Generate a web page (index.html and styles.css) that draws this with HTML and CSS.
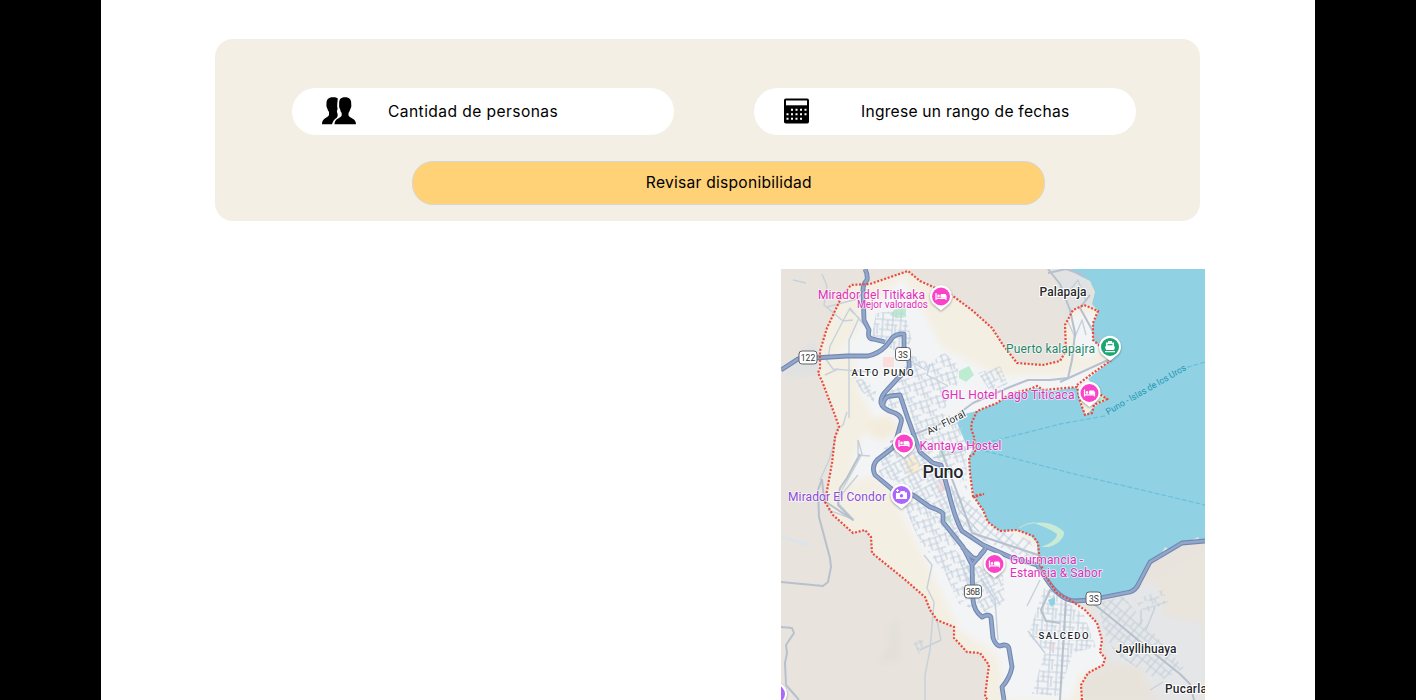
FILE: index.html
```html
<!DOCTYPE html>
<html lang="es">
<head>
<meta charset="utf-8">
<title>Disponibilidad</title>
<link rel="stylesheet" href="styles.css">
</head>
<body>
<main class="page">
  <section class="booking">
    <div class="fields">
      <div class="field">
        <svg class="people" width="34" height="28" viewBox="0 0 34 28">
          <path d="M11 0.300C7 0 4.200 2.500 4.500 6.500C4.300 8.500 4.300 9.500 5.300 11.500C5.800 13.500 6.500 14 7 15V18C6 21 0 20.500 0 27.300H10C11 23.500 12.500 22.500 14.500 21C16 19.500 16 17.500 15 15C14.500 13.500 15.800 13 15.500 11.500C14.800 9 15.500 5 15.800 1.600C14.500 0.400 13 0.200 11 0.300Z"/>
          <path d="M23 0.300C18.500 0.300 16.800 3 17.200 7C16.900 9 17.200 11 18.200 12.500C18.500 14.500 19 15 19.700 16V18.500C18.500 21.500 12.700 21 12.500 27.300H34C34 21 28 21.500 26.500 18.500V16C27.200 15 27.800 14 28.200 12.300C29.400 10.500 29.500 9 29.200 7C29.600 3 27.500 0.300 23 0.300Z"/>
        </svg>
        <span class="label-people">Cantidad de personas</span>
      </div>
      <div class="field">
        <svg class="calendar" width="25" height="26" viewBox="0 0 25 26">
          <rect y="0.500" width="25" height="25" rx="1.800"/>
          <path d="M2 2.500H23V7.300H2Z" fill="#fff"/>
          <path d="M7 11.700H23M2.500 16.200H23M2.500 20.700H19" stroke="#fff" stroke-width="2" stroke-dasharray="2 2.500"/>
        </svg>
        <span class="label-dates">Ingrese un rango de fechas</span>
      </div>
    </div>
    <button class="check" type="button"><span>Revisar disponibilidad</span></button>
  </section>

  <section class="location">
    <svg class="map" width="424" height="431" viewBox="781 269 424 431">
      <defs>
        <pattern id="grid-a" width="17" height="19" patternUnits="userSpaceOnUse" patternTransform="rotate(-18)">
          <path d="M0 2H17M0 8H12M5 14H17M3 0V14M9 2V19M14 0V8M12 14V19"/>
        </pattern>
        <pattern id="grid-b" width="16" height="18" patternUnits="userSpaceOnUse" patternTransform="rotate(-28)">
          <path d="M0 1H16M0 6H9M4 11H16M0 15H10M2 0V15M7 1V18M12 0V11"/>
        </pattern>
        <pattern id="grid-c" width="18" height="17" patternUnits="userSpaceOnUse" patternTransform="rotate(4)">
          <path d="M0 2H18M5 7H18M0 12H13M3 0V17M8 2V12M13 0V17M16 7V17"/>
        </pattern>
        <pattern id="grid-d" width="18" height="17" patternUnits="userSpaceOnUse" patternTransform="rotate(40)">
          <path d="M0 2H18M0 9H18M3 0V17M9 2V9M14 0V17"/>
        </pattern>
        <filter id="soft" x="-20%" y="-20%" width="140%" height="140%"><feGaussianBlur stdDeviation="3"/></filter>
        <clipPath id="town"><path d="M908 271L870 284L851 285L842 296L827 328L820 351L818 373L836 418L839 427L835 437L832 463L825 502L833 515L853 533L865 530L871 537L872 553L903 578L925 597L937 620L954 627V638L967 652L980 653L989 665L985 697V700H1082L1081 685L1088 673L1103 665L1105 658L1100 652L1102 640L1097 623L1085 610L1070 600L1110 361L1093 340V323L1098 311L1084 305L1073 310L1065 325L1066 351L1060 361L1043 365L1017 363L1003 345L992 328L973 311L953 296L920 281Z"/></clipPath>
        <g id="bed">
          <path d="M-5 -3.500V3.500M-5 1.800H5M5 3.500V-1" fill="none" stroke="#fff" stroke-width="1.200"/>
          <rect x="-0.500" y="-2.400" width="5.500" height="3.700" rx="1" fill="#fff"/><circle cx="-2.500" cy="-0.600" r="1.300" fill="#fff"/>
        </g>
        <path id="pin" d="M0 14L-6 9A11 11 0 1 1 6 9Z"/>
      </defs>

      <!-- terrain -->
      <rect x="781" y="269" width="424" height="431" fill="#e8e3dd"/>
      <g filter="url(#soft)">
        <path d="M781 378L812 340L831 372L812 374Z" fill="#e0e1e2"/>
        <path d="M890 623L899 620V638L901 660L877 665L888 646Z" fill="#e3e0d9"/>
        <path d="M1094 600L1155 580L1190 600L1205 635V700H1160L1110 665L1094 620Z" fill="#e5e6e8"/>
        <path d="M1052 269H1085L1095 310L1070 330L1060 290Z" fill="#e0e2e4"/>
        <path d="M1108 664L1140 667L1155 700H1082V685Z" fill="#e8e3da"/>
        <path d="M1155 580L1205 548V625L1165 615Z" fill="#e9e4dc"/>
      </g>
      <g clip-path="url(#town)">
        <rect x="781" y="269" width="424" height="431" fill="#f4efe3"/>
        <g fill="#f3f4f6" filter="url(#soft)">
          <path d="M867 310L903 277L922 309L942 348L1000 376H1060L1130 360L1080 395L980 430L985 510L1055 560L1110 630V663L1080 674L1070 700H1005L998 655L960 630L930 570L912 535L888 488L870 475L850 485L855 450L875 420L860 395L852 350L830 360L855 335Z"/>
          <path d="M1068 315H1105V350L1080 360Z"/>
        </g>
        <path d="M865 423L888 415L901 430L882 441L870 436Z" fill="#f3ecdc" filter="url(#soft)"/>
      </g>

      <!-- water -->
      <path fill="#90d2e4" d="M1070 269H1205V541L1182 543L1150 562L1138 587L1130 592L1074 601L1057 593L1047 580L1038 563L1037 543L1030 535L1017 530L1000 531L988 522L983 510L974 497L970 473L969 457L973 448L966 444L957 423L960 415L977 411L997 403L1010 395L1037 388L1053 391L1077 387L1080 403L1086 415L1094 407L1107 399L1100 393L1088 379L1110 361L1100 346L1093 340V323L1099 312L1092 304L1095 292L1090 281L1078 275Z"/>
      <path d="M1034 523C1044 521 1057 524 1064 532C1065 538 1056 546 1048 547H1041C1050 544 1057 539 1057 534C1050 529 1042 526 1034 523Z" fill="#cbead6"/>
      <path d="M1019 528Q1026 523 1035 522.500" fill="none" stroke="#cbe3dc"/>
      <path d="M1160 556L1165 547L1170 550ZM1190 541L1198 537L1200 541Z" fill="#e8e3dd"/>
      <g fill="#bdecd0">
        <path d="M890 315L895 309L906 308V317L897 318ZM959 371L969 366L974 375L966 382L959 378ZM939 451L945 449V457L939 458ZM943 519L951 515V519L945 523ZM1097 401L1104 395L1106 400L1098 404Z"/>
      </g>
      <g fill="#fbdedc"><path d="M883 357H894V367H883ZM937 482L943 480L946 490L940 494ZM1049 642H1054V651H1049Z"/></g>
      <path d="M904 460L916 455L921 470L909 477Z" fill="#f8ecd2"/>

      <!-- street blocks -->
      <g class="blocks">
        <path fill="url(#grid-c)" d="M876 313L904 310L912 340L900 355L872 335Z"/>
        <path fill="url(#grid-a)" d="M889 392L912 355L930 364L944 352L958 365L957 385L942 414L960 418L966 445L967 490L946 465L922 450L908 405L888 410Z"/>
        <path fill="url(#grid-b)" d="M854 377L865 380L876 391L874 402L860 390ZM978 373L1000 366L1008 384L990 391Z"/>
        <path fill="url(#grid-b)" d="M884 448L905 440L922 456L941 468L950 512L960 535L955 548L930 507L900 483L878 475Z"/>
        <path fill="url(#grid-a)" d="M900 497L913 498L940 518L951 545L970 566L977 610L959 604L945 573L920 542Z"/>
        <path fill="url(#grid-d)" d="M950 488L973 502L989 525L1030 540L1038 562L983 541L961 525Z"/>
        <path fill="url(#grid-b)" d="M958 558L1003 575L1005 602L986 614L976 602Z"/>
        <path fill="url(#grid-c)" d="M1044 588L1061 597L1084 615L1096 647L1073 653L1058 696L1032 694L1045 651L1028 635Z"/>
        <path fill="url(#grid-d)" d="M1098 603L1123 596L1168 650L1184 668L1160 681L1116 655L1104 632Z"/>
        <path fill="url(#grid-a)" d="M1134 600L1163 590L1168 602L1146 613ZM913 642L922 639L927 648L919 654Z"/>
      </g>
      <path d="M1048 600L1055 597V604L1051 607Z" fill="#90d2e4"/>

      <!-- local streets -->
      <g class="streets">
        <path d="M793 280L806 283M822 274L827 286L824 305L843 321L830 346L828 360M866 289L857 299L827 307M843 321L853 320M849 309L859 318L849 340V418M864 325L850 308L843 321M825 358L833 369L872 372M825 375L838 369M836 437L829 460L820 480M847 412L843 425L836 430M858 440L862 454L842 490L838 503L853 519L828 510M858 440V455L870 456M837 500L858 475M930 364L927 375L948 386M903 357L926 370M951 486L959 510L979 532M978 444L960 452L933 458M981 578L995 600L998 640M1027 606L1040 580M1045 653L1028 631M924 555L932 565L927 588L934 602L930 650L925 675V700M937 620L941 640L920 650M1067 320L1075 337L1082 320L1086 335M1070 290L1078 280L1086 301M1155 607L1146 630M1141 610V625M1150 690L1163 682"/>
      </g>
      <g class="roads">
        <path d="M1048 269L1060 284L1070 310L1075 333L1072 360L1068 378L1050 380L1028 380L1010 387L973 403L950 420L915 434L890 442"/>
        <path d="M1048 273L1066 269L1086 276M1060 382L1108 360M1090 295L1080 308L1095 335L1110 350M941 450L960 500L972 533L1038 555M860 454L847 478L840 488L838 505L853 520L823 500M822 479L818 490L819 517L830 558L831 567L828 582L823 586L781 582M822 479L824 500M781 627L792 628L794 633L786 645L787 653L785 663L786 685L799 700"/>
        <path d="M1094 604L1120 625L1150 650L1180 674L1190 684L1194 700M1046 599L1050 590L1066 597L1060 700M1046 599L1041 610L1046 621L1060 623"/>
      </g>
      <path d="M781 537L809 545" stroke="#dce3ea" stroke-width="3"/>

      <!-- highways -->
      <g id="highways">
        <g class="highway-edge">
          <path id="hw" d="M865 269Q868 275 867 280Q863 284 863 290L864 320L869 330Q867 339 873 339L885 342M781 370L798 359L847 356L868 356Q878 354 886 346L893 337Q898 333 904 334V347Q910 357 909 368Q906 374 900 376L887 390Q880 397 881 403Q882 409 895 413Q903 417 901 423L897 437Q897 445 890 450L877 460Q871 467 875 475L893 490L913 495L930 507Q942 511 943 514V522L963 547L972 565L973 600Q974 611 982 617Q990 613 991 618L993 638Q996 646 1000 646Q1008 643 1009 649L1012 667Q1010 678 1002 687L1004 700M883 407Q883 397 890 396L900 395L907 416L920 452L933 463L941 465L948 490Q955 519 962 531L983 545L1010 557L1037 565L1047 580Q1060 600 1075 601L1090 600L1130 592Q1136 590 1139 583L1150 562L1182 543L1205 541M962 547L972 557Q978 561 981 554L986 548M972 565L985 550"/>
        </g>
        <use href="#hw" class="highway"/>
      </g>

      <path class="ferry" d="M1205 362L1185 368M1105 416L1060 424L978 445M978 449L1070 473L1205 505"/>

      <!-- district limit -->
      <path class="limit" d="M1082 700L1081 685L1088 673L1103 665L1105 658L1100 652L1102 640L1097 623L1085 610L1070 600L1057 593L1048 580L1040 563L1038 543L1033 536L1017 530L1000 531L988 522L983 510L974 497L984 494L973 496L970 473L969 457L975 453L974 437L971 428L972 422L977 411L997 403L1010 394L1030 389L1037 386L1043 390L1077 387L1080 401L1085 415L1092 413L1094 405L1107 399L1098 393M1077 385L1093 373L1110 361L1100 346L1093 340V323L1098 311L1084 305L1073 310L1065 325L1066 351L1060 361L1043 365L1017 363L1003 345L992 328L973 311L953 296L920 281L908 271L870 284L851 285L842 296L827 328L820 351V368L818 373L822 381L836 418L839 427L835 437L832 463L825 502L833 515L853 533L865 530L871 537L872 553L903 578L925 597L930 610L937 620L954 627V638L967 652L980 653L989 665L987 680L985 697L988 700"/>

      <!-- route shields -->
      <g class="shield">
        <rect x="799" y="351" width="18" height="13" rx="3"/><text x="808" y="361">122</text>
        <rect x="895.500" y="347.500" width="15" height="13" rx="3"/><text x="903" y="357.500">3S</text>
        <rect x="964.500" y="585" width="17" height="13" rx="3"/><text x="973" y="595" textLength="14">36B</text>
        <rect x="1086" y="592" width="15" height="13" rx="3"/><text x="1094" y="602">3S</text>
      </g>

      <!-- place names -->
      <g class="place">
        <text x="1039.500" y="295.500" textLength="47">Palapaja</text>
        <text x="1115.500" y="653" textLength="61">Jayllihuaya</text>
        <text x="1165" y="692.500" textLength="42">Pucarla</text>
        <text x="922.500" y="477.500" class="city" textLength="41">Puno</text>
        <text x="851.500" y="376" class="district" textLength="62">ALTO PUNO</text>
        <text x="1038.500" y="639" class="district" textLength="50">SALCEDO</text>
        <text transform="translate(929 435) rotate(-27)" class="avenue" textLength="42">Av. Floral</text>
      </g>
      <text class="ferry-name" transform="translate(1108 415) rotate(-30)" textLength="91">Puno - Islas de los Uros</text>
      <g class="lodging">
        <text x="818" y="299" textLength="107">Mirador del Titikaka</text>
        <text x="857" y="307.500" class="note" textLength="71">Mejor valorados</text>
        <text x="941.500" y="399" textLength="133">GHL Hotel Lago Titicaca</text>
        <text x="919.500" y="449.500" textLength="82">Kantaya Hostel</text>
        <text x="1010" y="564" textLength="73">Gourmancia -</text>
        <text x="1010" y="577" textLength="92">Estancia &amp; Sabor</text>
        <text x="1006" y="353" class="port" textLength="89">Puerto kalapajra</text>
        <text x="788" y="501" class="viewpoint" textLength="98">Mirador El Condor</text>
      </g>

      <!-- markers -->
      <g class="pins">
        <g transform="translate(941 296.500)"><use href="#pin"/><circle r="9" fill="#fb43ca"/><use href="#bed"/></g>
        <g transform="translate(1089.500 393)"><use href="#pin"/><circle r="9" fill="#fb43ca"/><use href="#bed"/></g>
        <g transform="translate(904 443.500)"><use href="#pin"/><circle r="9" fill="#fb43ca"/><use href="#bed"/></g>
        <g transform="translate(994.500 564)"><use href="#pin"/><circle r="9" fill="#fb43ca"/><use href="#bed"/></g>
        <g transform="translate(1110 347)"><use href="#pin"/><circle r="9" fill="#1ba672"/><path d="M-2 -6H2V-4.500H4V-1L5 0L4 3H-4L-5 0L-4 -1V-4.500H-2ZM-5 4H5V5.300H-5Z" fill="#fff"/><path d="M-2.500 -2.300H2.500" stroke="#1ba672" stroke-width="1.200"/></g>
        <g transform="translate(901.500 495)"><use href="#pin"/><circle r="9" fill="#ad66fb"/><path d="M-5.500 -2H-2L-0.500 -4H3L4 -2.500H5.500V4H-5.500Z" fill="#fff"/><circle cy="0.700" r="1.700" fill="#ad66fb"/><path d="M-4 -6V-3M-5.500 -4.500H-2.500" stroke="#fff"/></g>
        <g transform="translate(776 694)"><use href="#pin"/><circle r="9" fill="#ad66fb"/></g>
      </g>
    </svg>
  </section>
</main>
</body>
</html>
```
FILE: styles.css
```css
body {
  margin: 0;
  height: 700px;
  overflow: hidden;
  background: #000;
  font-family: Inter, "Open Sans", sans-serif;
  color: #000;
}
.page {
  box-sizing: border-box;
  width: 1214px;
  height: 700px;
  margin-left: 101px;
  padding: 39.400px 110px 0 114px;
  background: #fff;
  overflow: hidden;
}
.booking {
  box-sizing: border-box;
  width: 985.400px;
  height: 181.600px;
  padding-top: 49px;
  border-radius: 18px;
  background: #f4efe4;
}
.fields {
  display: flex;
  gap: 80px;
  padding-left: 77px;
}
.field {
  box-sizing: border-box;
  display: flex;
  align-items: center;
  width: 382px;
  height: 46.600px;
  padding: 0 0 1px 30px;
  border-radius: 24px;
  background: #fff;
  font-size: 15.600px;
  white-space: nowrap;
}
.people { margin-right: 32px; }
.calendar { margin-right: 52px; }
.label-people { letter-spacing: 0.420px; }
.label-dates { letter-spacing: 0.250px; }
.check {
  display: block;
  width: 633px;
  height: 44px;
  margin: 26px 0 0 197.400px;
  padding: 0 0 1px;
  border: 1px solid #d6d6d6;
  border-radius: 21px;
  background: #ffd277;
  color: #000;
  font: 15.600px Inter, "Open Sans", sans-serif;
  letter-spacing: 0.250px;
}
.location {
  display: flex;
  justify-content: flex-end;
  margin-top: 48px;
}
.map {
  flex: none;
  font-family: Roboto, sans-serif;
}
.map pattern path {
  fill: none;
  stroke: #c3d0dd;
  stroke-width: 1.200;
}
.streets, .roads, .ferry, .limit, .highway-edge { fill: none; }
.streets { stroke: #c6d1dc; stroke-width: 1.400; stroke-linejoin: round; }
.roads { stroke: #b6c1cd; stroke-width: 2; stroke-linejoin: round; }
.highway-edge { stroke: #7189b2; stroke-width: 4.800; stroke-linejoin: round; }
.highway { fill: none; stroke: #93a7cb; stroke-width: 2.600; stroke-linejoin: round; }
.ferry { stroke: #6bc2da; stroke-width: 1.300; stroke-dasharray: 5 2; }
.limit { stroke: #ea4b3c; stroke-width: 2.200; stroke-dasharray: 2 1.700; }
.shield rect { fill: #fff; stroke: #606468; }
.shield text { font-size: 8.500px; text-anchor: middle; fill: #333; }
.place text {
  font-size: 12px;
  font-weight: 500;
  fill: #25282c;
  stroke: #fff;
  stroke-width: 2px;
  paint-order: stroke;
}
.place .city { font-size: 18px; }
.place .district { font-size: 9.500px; }
.place .avenue { font-size: 10px; font-weight: 400; }
.ferry-name { font-size: 9px; fill: #1e95b2; stroke: #90d2e4; stroke-width: 2px; paint-order: stroke; }
.lodging text {
  font-size: 12px;
  fill: #e22fb9;
  stroke: rgba(255, 255, 255, 0.700);
  stroke-width: 1.500px;
  paint-order: stroke;
}
.lodging .note { font-size: 10px; }
.lodging .port { fill: #23866a; }
.lodging .viewpoint { fill: #8b4bd8; }
.pins use[href="#pin"] { fill: #fff; filter: drop-shadow(0 1px 1px rgba(0, 0, 0, 0.350)); }
```
